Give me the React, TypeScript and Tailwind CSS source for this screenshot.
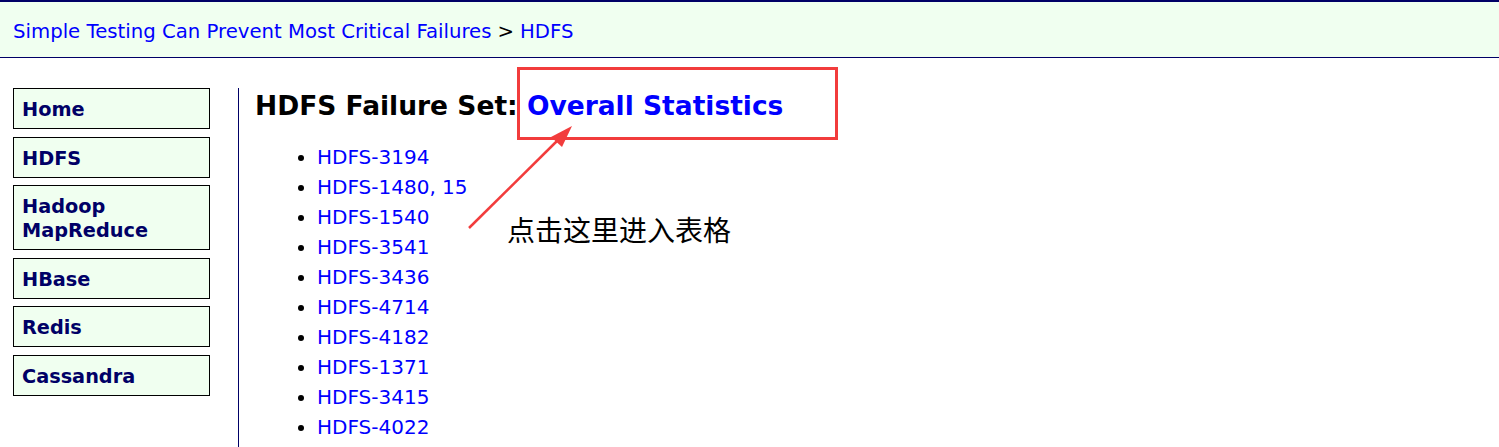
const sections = ["Home", "HDFS", "Hadoop MapReduce", "HBase", "Redis", "Cassandra"];

const issues = [
  "HDFS-3194",
  "HDFS-1480, 15",
  "HDFS-1540",
  "HDFS-3541",
  "HDFS-3436",
  "HDFS-4714",
  "HDFS-4182",
  "HDFS-1371",
  "HDFS-3415",
  "HDFS-4022",
];

export default function App() {
  return (
    <div className="relative h-[447px] overflow-hidden bg-white font-['DejaVu_Sans',Verdana,sans-serif]">
      <div className="border-t-2 border-b border-[#000066] bg-[#f0fff0] h-[58px] flex items-center px-[13px] pt-[4px] text-[19.7px] text-[#0000ff]">
        <span>Simple Testing Can Prevent Most Critical Failures</span>
        <span className="text-black mx-[6px]">&gt;</span>
        <span>HDFS</span>
      </div>

      <div className="flex pt-[30px]">
        <div className="w-[238px] pl-[13px] flex flex-col gap-[7.5px]">
          {sections.map((s) => (
            <div
              key={s}
              className="w-[197px] border border-black bg-[#f0fff0] px-[8px] pt-[9px] pb-[6px] text-[19.3px] leading-[24px] font-bold text-[#000066]"
            >
              {s}
            </div>
          ))}
        </div>

        <div className="border-l border-[#000066] pl-[16px] h-[400px]">
          <h1 className="text-[26.5px] font-bold leading-[32px] mt-[2px]">
            HDFS Failure Set: <span className="text-[#0000ff]">Overall Statistics</span>
          </h1>
          <ul className="list-disc pl-[62px] mt-[20px] text-[20px] leading-[30px] text-black">
            {issues.map((i) => (
              <li key={i}>
                <span className="text-[#0000ff]">{i}</span>
              </li>
            ))}
          </ul>
        </div>
      </div>

      <div className="absolute left-[517px] top-[67px] w-[321px] h-[73px] border-[3px] border-[#f23c3c]" />
      <svg className="absolute left-0 top-0" width="1499" height="447">
        <line x1="469" y1="228" x2="558" y2="140" stroke="#f23c3c" strokeWidth="2.5" />
        <polygon points="572,126 551,137 562,147" fill="#f23c3c" />
      </svg>
      <div className="absolute left-[507px] top-[210px] text-[28px] leading-[38px] text-black font-['Noto_Sans_CJK_SC',sans-serif]">
        点击这里进入表格
      </div>
    </div>
  );
}
